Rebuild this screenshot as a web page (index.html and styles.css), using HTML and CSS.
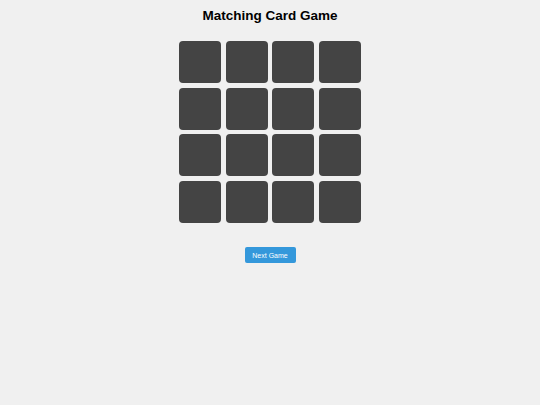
FILE: index.html
```html
<!DOCTYPE html>
<html>
<head>
<meta charset="utf-8">
<link rel="stylesheet" href="styles.css">
</head>
<body>
<div class="page">
  <h1 class="title">Matching Card Game</h1>
  <div class="grid">
    <div class="card"></div><div class="card"></div><div class="card"></div><div class="card"></div>
    <div class="card"></div><div class="card"></div><div class="card"></div><div class="card"></div>
    <div class="card"></div><div class="card"></div><div class="card"></div><div class="card"></div>
    <div class="card"></div><div class="card"></div><div class="card"></div><div class="card"></div>
  </div>
  <button class="next">Next Game</button>
</div>
</body>
</html>
```

FILE: styles.css
```css
html, body {
  margin: 0;
  padding: 0;
  background: #f0f0f0;
  font-family: "Liberation Sans", Arial, sans-serif;
}
.page {
  display: flex;
  flex-direction: column;
  align-items: center;
  padding-top: 8px;
}
.title {
  margin: 0;
  font-size: 13.5px;
  line-height: 16px;
  font-weight: bold;
  color: #000;
}
.grid {
  margin-top: 17px;
  display: grid;
  grid-template-columns: repeat(4, 42px);
  grid-auto-rows: 42px;
  gap: 4.6px;
}
.card {
  background: #444444;
  border-radius: 4px;
}
.next {
  margin-top: 24.5px;
  width: 51px;
  height: 16px;
  padding: 0;
  border: none;
  border-radius: 2px;
  background: #3498db;
  color: #fff;
  font-family: "Liberation Sans", Arial, sans-serif;
  font-size: 7px;
}
```
